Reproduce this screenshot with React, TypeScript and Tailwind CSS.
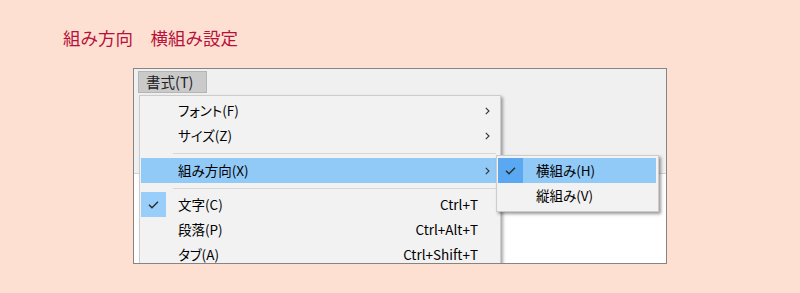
import React from "react";

const jp = "font-['Noto_Sans_CJK_JP','Noto_Sans',sans-serif]";

function Check() {
	return (
		<svg width="11" height="8" viewBox="0 0 11 8" fill="none">
			<polyline points="1,3.8 4,6.8 10,0.8" stroke="#2b2b2b" strokeWidth="1.4" />
		</svg>
	);
}

function Chevron() {
	return (
		<svg width="5" height="8" viewBox="0 0 5 8" fill="none">
			<polyline points="0.8,0.8 4,4 0.8,7.2" stroke="#333" strokeWidth="1.1" />
		</svg>
	);
}

interface ItemProps {
	label: string;
	shortcut?: string;
	sub?: boolean;
	active?: boolean;
	checked?: boolean;
}

function MenuItem({ label, shortcut, sub, active, checked }: ItemProps) {
	return (
		<div className={`flex items-center h-[25px] ${active ? "bg-[#91c9f7]" : ""}`}>
			<div
				className={`w-[25px] h-[25px] flex items-center justify-center ${
					checked ? (active ? "bg-[#5aa8f2]" : "bg-[#99cdfa]") : ""
				}`}>
				{checked && <Check />}
			</div>
			<div className="ml-[12px] flex-1">{label}</div>
			{shortcut && <div>{shortcut}</div>}
			<div className="w-[18px] flex justify-center">{sub && <Chevron />}</div>
		</div>
	);
}

function Separator({ bottom }: { bottom: string }) {
	return (
		<div className={`pt-[5px] ${bottom} pl-[32px]`}>
			<div className="h-px bg-[#d7d7d7]" />
		</div>
	);
}

export default function App() {
	return (
		<div className={`h-[293px] w-full bg-[#fee0d2] pt-[26px] ${jp}`}>
			<h1 className="ml-[63px] text-[17.5px] leading-[24px] text-[#b6123a]">
				組み方向　横組み設定
			</h1>

			<div className="relative ml-[133px] mt-[18px] w-[534px] h-[196px] border border-[#858585] bg-white overflow-hidden text-[13.5px] text-black [font-feature-settings:'palt']">
				{/* menu bar + toolbar area */}
				<div className="h-[105px] bg-[#f0f0f0] border-b border-[#d2d2d2] pt-[2px] pl-[4px]">
					<div className="w-[69px] h-[22px] bg-[#cacaca] border border-[#b4b4b4] flex items-center pl-[7px] text-[14.5px] text-[#222] [font-feature-settings:normal]">
						書式(T)
					</div>
				</div>

				{/* dropdown */}
				<div className="absolute left-[5px] top-[26px] w-[362px] h-[200px] bg-[#f2f2f2] border border-[#cccccc] pt-[2px] pl-px pr-[4px] shadow-[2px_2px_3px_rgba(0,0,0,0.35)]">
					<MenuItem label="フォント(F)" sub />
					<MenuItem label="サイズ(Z)" sub />
					<Separator bottom="pb-[4px]" />
					<MenuItem label="組み方向(X)" sub active />
					<Separator bottom="pb-[3px]" />
					<MenuItem label="文字(C)" shortcut="Ctrl+T" checked />
					<MenuItem label="段落(P)" shortcut="Ctrl+Alt+T" />
					<MenuItem label="タブ(A)" shortcut="Ctrl+Shift+T" />
				</div>

				{/* submenu */}
				<div className="absolute left-[362px] top-[86px] w-[163px] h-[57px] bg-[#f2f2f2] border border-[#cccccc] pt-[2px] pl-px pr-[2px] shadow-[2px_2px_3px_rgba(0,0,0,0.4)]">
					<div className="flex items-center h-[25px] bg-[#91c9f7]">
						<div className="w-[25px] h-[25px] flex items-center justify-center bg-[#5aa8f2]">
							<Check />
						</div>
						<div className="ml-[13px]">横組み(H)</div>
					</div>
					<div className="flex items-center h-[25px]">
						<div className="w-[25px]" />
						<div className="ml-[13px]">縦組み(V)</div>
					</div>
				</div>
			</div>
		</div>
	);
}
